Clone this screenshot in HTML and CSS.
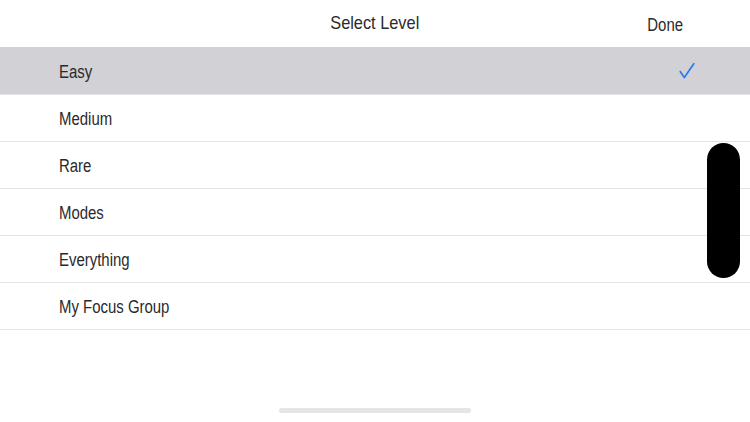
FILE: index.html
```html
<!DOCTYPE html>
<html>
<head>
<meta charset="utf-8">
<link rel="stylesheet" href="styles.css">
</head>
<body>
<div class="screen">
  <header class="nav">
    <div></div>
    <div class="title"><span class="sq sq-c">Select Level</span></div>
    <div class="done"><span class="sq sq-r">Done</span></div>
  </header>
  <ul class="list">
    <li class="row selected"><span class="sq sq-l">Easy</span>
      <svg class="check" width="16" height="16" viewBox="0 0 16 16"><path d="M1.2 8.6 L5.3 14.6 L14.8 0.8" fill="none" stroke="#2a7af0" stroke-width="1.7" stroke-linecap="round" stroke-linejoin="round"/></svg>
    </li>
    <li class="row"><span class="sq sq-l">Medium</span></li>
    <li class="row"><span class="sq sq-l">Rare</span></li>
    <li class="row"><span class="sq sq-l">Modes</span></li>
    <li class="row"><span class="sq sq-l">Everything</span></li>
    <li class="row last"><span class="sq sq-l">My Focus Group</span></li>
  </ul>
  <div class="scroll-pill"></div>
  <div class="home-indicator"></div>
</div>
</body>
</html>
```
FILE: styles.css
```css
html, body {
  margin: 0;
  padding: 0;
  background: #ffffff;
}
.screen {
  position: relative;
  width: 750px;
  height: 422px;
  overflow: hidden;
  font-family: "Liberation Sans", Arial, sans-serif;
  color: #2a2a2c;
}
.sq {
  display: inline-block;
  transform: scaleX(0.83);
  white-space: nowrap;
}
.sq-l { transform-origin: left center; }
.sq-c { transform-origin: center center; }
.sq-r { transform-origin: right center; }
.nav {
  height: 47px;
  display: grid;
  grid-template-columns: 1fr auto 1fr;
  align-items: center;
}
.title {
  font-size: 19px;
  padding-bottom: 1px;
}
.title .sq { transform: scaleX(0.86); }
.done {
  justify-self: end;
  padding-right: 67px;
  padding-top: 3px;
  font-size: 18px;
}
.list {
  list-style: none;
  margin: 0;
  padding: 0;
}
.row {
  height: 46px;
  border-top: 1px solid #e4e4e6;
  display: flex;
  align-items: center;
  justify-content: space-between;
  padding: 2px 55px 0 59px;
  box-sizing: border-box;
  height: 47px;
  font-size: 18px;
}
.row.last {
  border-bottom: 1px solid #e4e4e6;
  height: 48px;
}
.row.selected {
  background: #d1d1d6;
  border-top-color: #d1d1d6;
}
.check {
  display: block;
  margin-top: -2px;
}
.scroll-pill {
  position: absolute;
  left: 707px;
  top: 143px;
  width: 33px;
  height: 135px;
  border-radius: 17px;
  background: #000000;
}
.home-indicator {
  position: absolute;
  left: 279px;
  top: 408px;
  width: 192px;
  height: 5px;
  border-radius: 3px;
  background: #e5e5e7;
}
```
